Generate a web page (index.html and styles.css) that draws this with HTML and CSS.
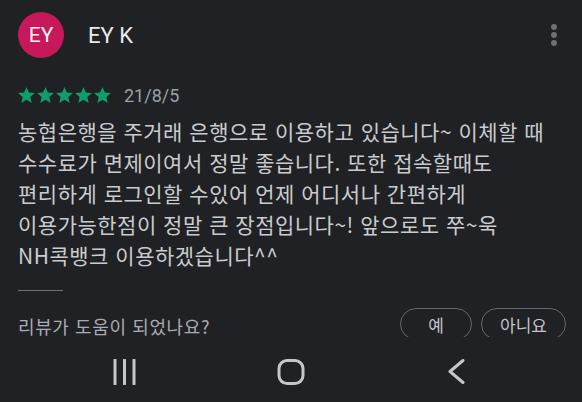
FILE: index.html
```html
<!DOCTYPE html>
<html lang="ko">
<head>
    <meta charset="UTF-8">
    <meta name="viewport" content="width=device-width, initial-scale=1.0">
    <title>리뷰</title>
    <link rel="stylesheet" href="styles.css">
</head>
<body>
    <div class="review">
        <div class="head">
            <div class="avatar">EY</div>
            <div class="name">EY K</div>
            <div class="more"><span></span><span></span><span></span></div>
        </div>
        <div class="meta">
            <div class="stars">
                <svg viewBox="2 2 20 19"><path d="M12 17.27L18.18 21l-1.64-7.03L22 9.24l-7.19-.61L12 2 9.19 8.63 2 9.24l5.46 4.73L5.82 21z"/></svg>
                <svg viewBox="2 2 20 19"><path d="M12 17.27L18.18 21l-1.64-7.03L22 9.24l-7.19-.61L12 2 9.19 8.63 2 9.24l5.46 4.73L5.82 21z"/></svg>
                <svg viewBox="2 2 20 19"><path d="M12 17.27L18.18 21l-1.64-7.03L22 9.24l-7.19-.61L12 2 9.19 8.63 2 9.24l5.46 4.73L5.82 21z"/></svg>
                <svg viewBox="2 2 20 19"><path d="M12 17.27L18.18 21l-1.64-7.03L22 9.24l-7.19-.61L12 2 9.19 8.63 2 9.24l5.46 4.73L5.82 21z"/></svg>
                <svg viewBox="2 2 20 19"><path d="M12 17.27L18.18 21l-1.64-7.03L22 9.24l-7.19-.61L12 2 9.19 8.63 2 9.24l5.46 4.73L5.82 21z"/></svg>
            </div>
            <span class="date">21/8/5</span>
        </div>
        <p class="text">농협은행을 주거래 은행으로 이용하고 있습니다~ 이체할 때 수수료가 면제이여서 정말 좋습니다. 또한 접속할때도 편리하게 로그인할 수있어 언제 어디서나 간편하게 이용가능한점이 정말 큰 장점입니다~! 앞으로도 쭈~욱 NH콕뱅크 이용하겠습니다^^</p>
        <div class="divider"></div>
        <div class="helpful">
            <span class="question">리뷰가 도움이 되었나요?</span>
            <button class="pill">예</button>
            <button class="pill">아니요</button>
        </div>
    </div>
    <div class="navbar">
        <svg class="nav-icon" viewBox="0 0 30 26"><path d="M5 1v24M14.5 1v24M24 1v24"/></svg>
        <svg class="nav-icon" viewBox="0 0 30 26"><rect x="3" y="1.5" width="24" height="23" rx="8"/></svg>
        <svg class="nav-icon" viewBox="0 0 30 26"><path d="M21 1.5L8 12.5 21 23.5"/></svg>
    </div>
</body>
</html>
```

FILE: styles.css
```css
html, body { margin: 0; padding: 0; background: #202124; }
body { font-family: "Noto Sans CJK KR", Roboto, "Noto Sans", sans-serif; color: #c9cccf; height: 402px; overflow: hidden; }

.review { padding: 12px 16px 0 18px; }

.head { display: flex; align-items: center; height: 46px; }
.avatar { width: 46px; height: 46px; border-radius: 50%; background: #c8185c; color: #f4f4f4; font-family: Roboto, sans-serif; font-size: 21px; display: flex; align-items: center; justify-content: center; }
.name { margin-left: 24px; font-family: Roboto, sans-serif; font-size: 22px; color: #e8eaed; flex: 1; }
.more { display: flex; flex-direction: column; gap: 2px; margin-right: 9px; }
.more span { width: 6px; height: 6px; border-radius: 50%; background: #6e6f71; }

.meta { display: flex; align-items: center; margin-top: 27px; height: 20px; }
.stars { display: flex; gap: 2px; }
.stars svg { width: 17px; height: 16px; fill: #0f9d6c; }
.date { margin-left: 13px; font-family: Roboto, sans-serif; font-size: 18px; color: #9aa0a6; }

.text { margin: 11px 0 0; font-size: 21px; line-height: 31px; word-break: keep-all; letter-spacing: 0.5px; }

.divider { width: 45px; height: 1px; background: #707275; margin-top: 19px; }

.helpful { display: flex; align-items: center; margin-top: 17px; gap: 9px; }
.question { flex: 1; font-size: 18px; letter-spacing: 0.6px; color: #a9acb0; padding-top: 3px; }
.pill { height: 32px; min-width: 72px; padding: 0 18px; border: 1px solid #66686b; border-radius: 16px; background: none; color: #c2c4c7; font-family: "Noto Sans CJK KR", sans-serif; font-size: 17px; box-sizing: border-box; }

.navbar { position: fixed; left: 0; right: 0; bottom: 0; height: 65px; background: #202124; display: flex; justify-content: center; gap: 136px; padding-top: 22px; box-sizing: border-box; }
.nav-icon { width: 30px; height: 26px; fill: none; stroke: #c6c6c6; stroke-width: 3; stroke-linecap: round; stroke-linejoin: round; }
```
